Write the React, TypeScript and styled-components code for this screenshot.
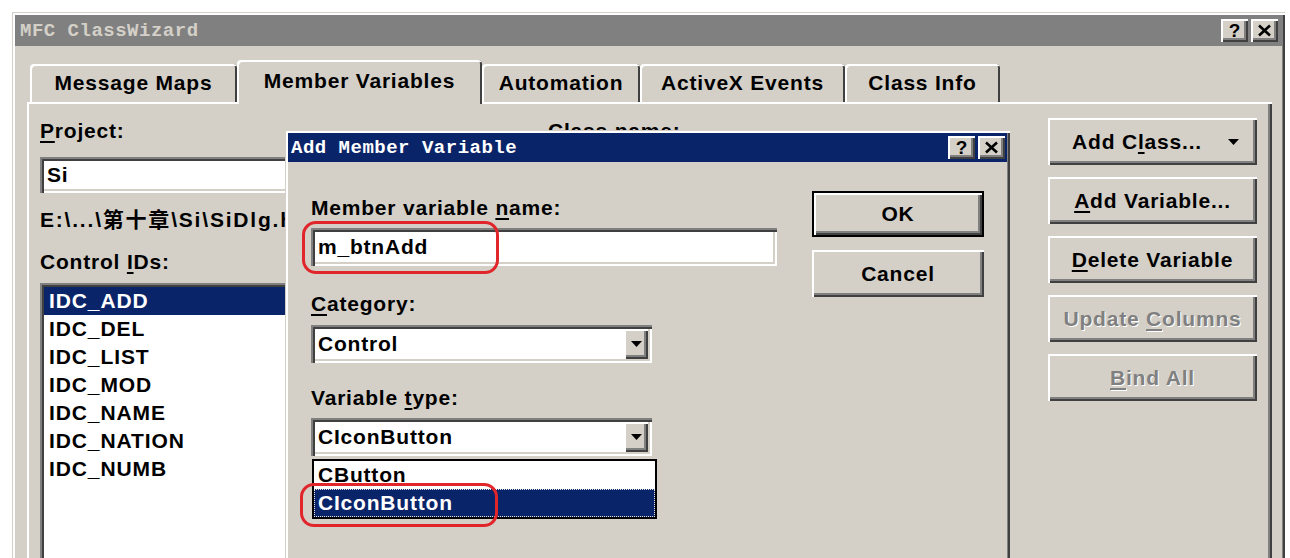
import React from 'react'
import styled, { createGlobalStyle } from 'styled-components'

const FACE = '#d4d0c8'
const NAVY = '#0a246a'
const SANS = `"Liberation Sans", "Noto Sans CJK SC", Arial, sans-serif`
const MONO = `"Liberation Mono", "DejaVu Sans Mono", monospace`

const raised = `
    box-shadow: inset 2px 2px #fff, inset -2px -2px #404040, inset -4px -4px #808080;
`
const sunken = `
    box-shadow: inset 2px 2px #808080, inset 4px 4px #404040, inset -2px -2px #fff, inset -4px -4px ${FACE};
`

const GlobalStyle = createGlobalStyle`
    html, body {
        margin: 0;
        padding: 0;
        background: #fff;
    }
    body {
        width: 1290px;
        height: 558px;
        overflow: hidden;
        font-family: ${SANS};
        color: #000;
    }
    * {
        box-sizing: border-box;
    }
`

const Triangle = () => (
    <svg width='11' height='6' viewBox='0 0 11 6'>
        <polygon points='0,0 11,0 5.5,6' fill='#000' />
    </svg>
)

const CloseGlyph = () => (
    <svg width='15' height='13' viewBox='0 0 15 13'>
        <path d='M2 1.5 L13 11.5 M13 1.5 L2 11.5' stroke='#000' strokeWidth='2.6' />
    </svg>
)

const Caption = ({ title, active }: { title: string; active?: boolean }) => (
    <TitleBar $active={active}>
        <TitleText $active={active}>{title}</TitleText>
        <CaptionButtons>
            <CaptionButton>?</CaptionButton>
            <CaptionButton>
                <CloseGlyph />
            </CaptionButton>
        </CaptionButtons>
    </TitleBar>
)

const tabs = [
    { label: 'Message Maps', width: 207 },
    { label: 'Member Variables', width: 245, active: true },
    { label: 'Automation', width: 158 },
    { label: 'ActiveX Events', width: 205 },
    { label: 'Class Info', width: 155 },
]

const controlIds = ['IDC_ADD', 'IDC_DEL', 'IDC_LIST', 'IDC_MOD', 'IDC_NAME', 'IDC_NATION', 'IDC_NUMB']

const App = () => {
    return (
        <Page>
            <GlobalStyle />
            <Window>
                <Caption title='MFC ClassWizard' />
                <Body>
                    <TabStrip>
                        {tabs.map((t) => (
                            <Tab key={t.label} $active={t.active} $width={t.width}>
                                {t.label}
                            </Tab>
                        ))}
                    </TabStrip>
                    <Panel>
                        <Column>
                            <Label>
                                <Accel>P</Accel>roject:
                            </Label>
                            <Field $top={13} $height={36}>
                                <FieldText>Si</FieldText>
                            </Field>
                            <PathText>E:\...\第十章\Si\SiDlg.h</PathText>
                            <Label $top={16}>
                                Control <Accel>I</Accel>Ds:
                            </Label>
                            <ListBox>
                                {controlIds.map((id, i) => (
                                    <ListItem key={id} $selected={i === 0}>
                                        {id}
                                    </ListItem>
                                ))}
                            </ListBox>
                        </Column>
                        {/* class name column: only the top of its label peeks above the dialog */}
                        <Column>
                            <Label>
                                Class <Accel>n</Accel>ame:
                            </Label>
                        </Column>
                        <ButtonStack>
                            <PushButton>
                                <span>
                                    Add C<Accel>l</Accel>ass...
                                </span>
                                <ButtonArrow>
                                    <Triangle />
                                </ButtonArrow>
                            </PushButton>
                            <PushButton>
                                <span>
                                    <Accel>A</Accel>dd Variable...
                                </span>
                            </PushButton>
                            <PushButton>
                                <span>
                                    <Accel>D</Accel>elete Variable
                                </span>
                            </PushButton>
                            <PushButton $disabled>
                                <span>
                                    Update <Accel>C</Accel>olumns
                                </span>
                            </PushButton>
                            <PushButton $disabled>
                                <span>
                                    <Accel>B</Accel>ind All
                                </span>
                            </PushButton>
                        </ButtonStack>
                    </Panel>
                </Body>

                <Dialog>
                    <Caption title='Add Member Variable' active />
                    <DialogBody>
                        <DialogFields>
                            <Label>
                                Member variable <Accel>n</Accel>ame:
                            </Label>
                            <Field $top={7} $height={38} $width={466}>
                                <FieldText>m_btnAdd</FieldText>
                            </Field>
                            <Label $top={25}>
                                <Accel>C</Accel>ategory:
                            </Label>
                            <Field $top={8} $height={38} $width={341}>
                                <FieldText>Control</FieldText>
                                <DropButton>
                                    <Triangle />
                                </DropButton>
                            </Field>
                            <Label $top={22}>
                                Variable <Accel>t</Accel>ype:
                            </Label>
                            <Field $top={7} $height={38} $width={341}>
                                <FieldText>CIconButton</FieldText>
                                <DropButton>
                                    <Triangle />
                                </DropButton>
                            </Field>
                            <DropList>
                                <DropItem>CButton</DropItem>
                                <DropItem $selected>CIconButton</DropItem>
                            </DropList>
                        </DialogFields>
                        <DialogButtons>
                            <PushButton $default>
                                <span>OK</span>
                            </PushButton>
                            <PushButton>
                                <span>Cancel</span>
                            </PushButton>
                        </DialogButtons>
                    </DialogBody>
                    <Annotation $left={17} $top={91} $width={197} $height={53} />
                    <Annotation $left={15} $top={353} $width={198} $height={44} />
                </Dialog>
            </Window>
        </Page>
    )
}

export default App

const Page = styled.div`
    width: 1290px;
    height: 558px;
    padding: 12px 0 0 12px;
    overflow: hidden;
    background: #fff;
`

const Window = styled.div`
    position: relative;
    width: 1273px;
    height: 620px;
    padding: 3px;
    background: ${FACE};
    box-shadow: inset 1px 1px ${FACE}, inset 3px 3px #fff, inset -2px -2px #404040, inset -3px -3px #808080;
`

const TitleBar = styled.div<{ $active?: boolean }>`
    height: ${(p) => (p.$active ? 29 : 31)}px;
    display: flex;
    align-items: center;
    justify-content: space-between;
    padding: ${(p) => (p.$active ? '0 2px 0 3px' : '0 4px 0 5px')};
    background: ${(p) => (p.$active ? NAVY : '#808080')};
`

const TitleText = styled.span<{ $active?: boolean }>`
    font-family: ${MONO};
    font-weight: bold;
    font-size: 19px;
    letter-spacing: 0.5px;
    color: ${(p) => (p.$active ? '#fff' : FACE)};
    white-space: nowrap;
`

const CaptionButtons = styled.div`
    display: flex;
    gap: 3px;
`

const CaptionButton = styled.div`
    width: 27px;
    height: 23px;
    display: flex;
    align-items: center;
    justify-content: center;
    background: ${FACE};
    ${raised}
    font-family: ${SANS};
    font-weight: bold;
    font-size: 19px;
    line-height: 1;
`

const Body = styled.div`
    margin-top: 14px;
    padding: 0 10px 0 12px;
`

const TabStrip = styled.div`
    position: relative;
    z-index: 1;
    display: flex;
    align-items: flex-end;
    height: 44px;
    margin-bottom: -2px;
    padding-left: 3px;
`

const Tab = styled.div<{ $active?: boolean; $width: number }>`
    width: ${(p) => p.$width}px;
    height: ${(p) => (p.$active ? 44 : 38)}px;
    margin-bottom: ${(p) => (p.$active ? 0 : 2)}px;
    padding-bottom: ${(p) => (p.$active ? 3 : 0)}px;
    display: flex;
    align-items: center;
    justify-content: center;
    background: ${FACE};
    border-radius: 4px 4px 0 0;
    box-shadow: inset 2px 2px #fff, inset -2px 0 #404040;
    font-weight: bold;
    font-size: 21px;
    letter-spacing: 0.8px;
    white-space: nowrap;
`

const Panel = styled.div`
    display: grid;
    grid-template-columns: 490px 482px 209px;
    column-gap: 18px;
    height: 520px;
    padding: 14px 11px 0 11px;
    border-top: 2px solid #fff;
    border-left: 2px solid #fff;
    box-shadow: inset -2px 0 #404040, inset -4px 0 #808080;
`

const Column = styled.div`
    display: flex;
    flex-direction: column;
    align-items: flex-start;
    min-width: 0;
`

const Label = styled.div<{ $top?: number }>`
    margin-top: ${(p) => p.$top ?? 0}px;
    font-weight: bold;
    font-size: 21px;
    line-height: 26px;
    letter-spacing: 0.8px;
    white-space: nowrap;
`

const Accel = styled.span`
    text-decoration: underline;
    text-decoration-thickness: 2px;
    text-underline-offset: 3px;
`

const Field = styled.div<{ $top?: number; $height: number; $width?: number }>`
    margin-top: ${(p) => p.$top ?? 0}px;
    width: ${(p) => (p.$width ? `${p.$width}px` : '100%')};
    height: ${(p) => p.$height}px;
    display: flex;
    align-items: center;
    padding: 4px;
    background: #fff;
    ${sunken}
`

const FieldText = styled.div`
    flex: 1;
    padding-left: 3px;
    font-weight: bold;
    font-size: 21px;
    letter-spacing: 0.8px;
    white-space: nowrap;
`

const DropButton = styled.div`
    width: 24px;
    height: 30px;
    display: flex;
    align-items: center;
    justify-content: center;
    background: ${FACE};
    ${raised}
`

const PathText = styled.div`
    margin-top: 14px;
    font-weight: bold;
    font-size: 21px;
    line-height: 26px;
    letter-spacing: 1.8px;
    white-space: nowrap;
`

const ListBox = styled.div`
    margin-top: 8px;
    width: 100%;
    height: 330px;
    padding: 4px 0 0 4px;
    background: #fff;
    ${sunken}
`

const ListItem = styled.div<{ $selected?: boolean }>`
    height: 28px;
    padding-left: 5px;
    font-weight: bold;
    font-size: 21px;
    line-height: 28px;
    letter-spacing: 0.9px;
    background: ${(p) => (p.$selected ? NAVY : 'transparent')};
    color: ${(p) => (p.$selected ? '#fff' : '#000')};
`

const ButtonStack = styled.div`
    display: flex;
    flex-direction: column;
    gap: 12px;
`

const PushButton = styled.div<{ $disabled?: boolean; $default?: boolean }>`
    position: relative;
    height: ${(p) => (p.$default ? 46 : 47)}px;
    display: flex;
    align-items: center;
    justify-content: center;
    background: ${FACE};
    box-shadow: ${(p) =>
        p.$default
            ? 'inset 0 0 0 2px #000, inset 4px 4px #fff, inset -4px -4px #404040, inset -6px -6px #808080'
            : 'inset 2px 2px #fff, inset -2px -2px #404040, inset -4px -4px #808080'};
    font-weight: bold;
    font-size: 21px;
    letter-spacing: 0.8px;
    white-space: nowrap;
    color: ${(p) => (p.$disabled ? '#808080' : '#000')};
    text-shadow: ${(p) => (p.$disabled ? '1px 1px 0 #fff' : 'none')};
`

const ButtonArrow = styled.span`
    display: inline-flex;
    margin-left: 26px;
    margin-right: -6px;
`

const Dialog = styled.div`
    position: absolute;
    left: 273px;
    top: 118px;
    z-index: 2;
    width: 725px;
    height: 480px;
    padding: 3px;
    background: ${FACE};
    box-shadow: inset 1px 1px ${FACE}, inset 3px 3px #fff, inset -2px -2px #404040, inset -3px -3px #808080;
`

const DialogBody = styled.div`
    display: grid;
    grid-template-columns: 466px 172px;
    column-gap: 35px;
    padding: 29px 0 0 23px;
`

const DialogFields = styled.div`
    display: flex;
    flex-direction: column;
    align-items: flex-start;
    padding-top: 4px;
`

const DialogButtons = styled.div`
    display: flex;
    flex-direction: column;
    gap: 13px;
`

const DropList = styled.div`
    margin: 3px 0 0 1px;
    width: 345px;
    border: 2px solid #000;
    background: #fff;
`

const DropItem = styled.div<{ $selected?: boolean }>`
    height: 28px;
    padding-left: 4px;
    font-weight: bold;
    font-size: 21px;
    line-height: 28px;
    letter-spacing: 0.8px;
    background: ${(p) => (p.$selected ? NAVY : '#fff')};
    color: ${(p) => (p.$selected ? '#fff' : '#000')};
    outline: ${(p) => (p.$selected ? '1px dotted #e8e8e8' : 'none')};
    outline-offset: -1px;
`

const Annotation = styled.div<{ $left: number; $top: number; $width: number; $height: number }>`
    position: absolute;
    left: ${(p) => p.$left}px;
    top: ${(p) => p.$top}px;
    width: ${(p) => p.$width}px;
    height: ${(p) => p.$height}px;
    border: 3px solid #e0262b;
    border-radius: 14px;
    pointer-events: none;
`
